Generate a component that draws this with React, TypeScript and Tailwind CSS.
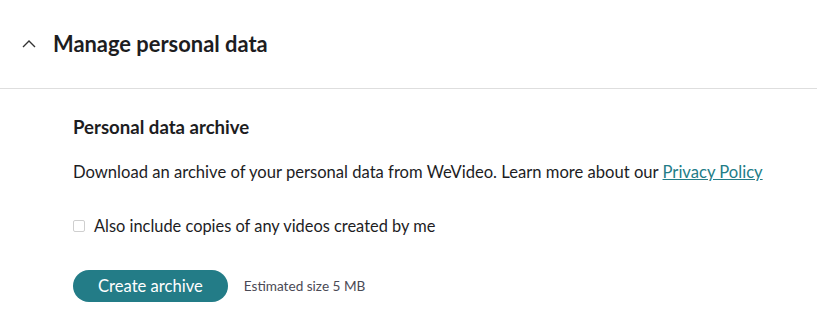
export default function App() {
  return (
    <div className="w-[817px] h-[322px] bg-white text-[#1d1d1f]" style={{ fontFamily: 'Lato, "Noto Sans", sans-serif' }}>
      <div className="flex items-center h-[88px] pl-[20px]">
        <svg width="18" height="18" viewBox="0 0 18 18" className="text-[#333] mt-[-1px]">
          <path d="M3 12 L9 6 L15 12" fill="none" stroke="currentColor" strokeWidth="1.4" />
        </svg>
        <h2 className="ml-[15px] text-[21.9px] font-bold">Manage personal data</h2>
      </div>
      <div className="border-t border-[#dedede]" />
      <div className="pl-[73px] pt-[25px]">
        <h3 className="text-[18.6px] font-bold leading-[26px]">Personal data archive</h3>
        <p className="mt-[20px] text-[16.6px] leading-[24px]">
          Download an archive of your personal data from WeVideo. Learn more about our{' '}
          <a href="#" className="text-[#237c87] underline">Privacy Policy</a>
        </p>
        <label className="mt-[30px] flex items-center gap-[9px] text-[16.4px] leading-[24px]">
          <span className="w-[12px] h-[12px] border border-[#cfcfcf] rounded-[2px] bg-white" />
          Also include copies of any videos created by me
        </label>
        <div className="mt-[32px] flex items-center gap-[16px]">
          <button className="h-[32px] px-[25px] rounded-full bg-[#237c87] text-white text-[16.6px]">Create archive</button>
          <span className="text-[13.6px] text-[#4a4a55]">Estimated size 5 MB</span>
        </div>
      </div>
    </div>
  )
}
